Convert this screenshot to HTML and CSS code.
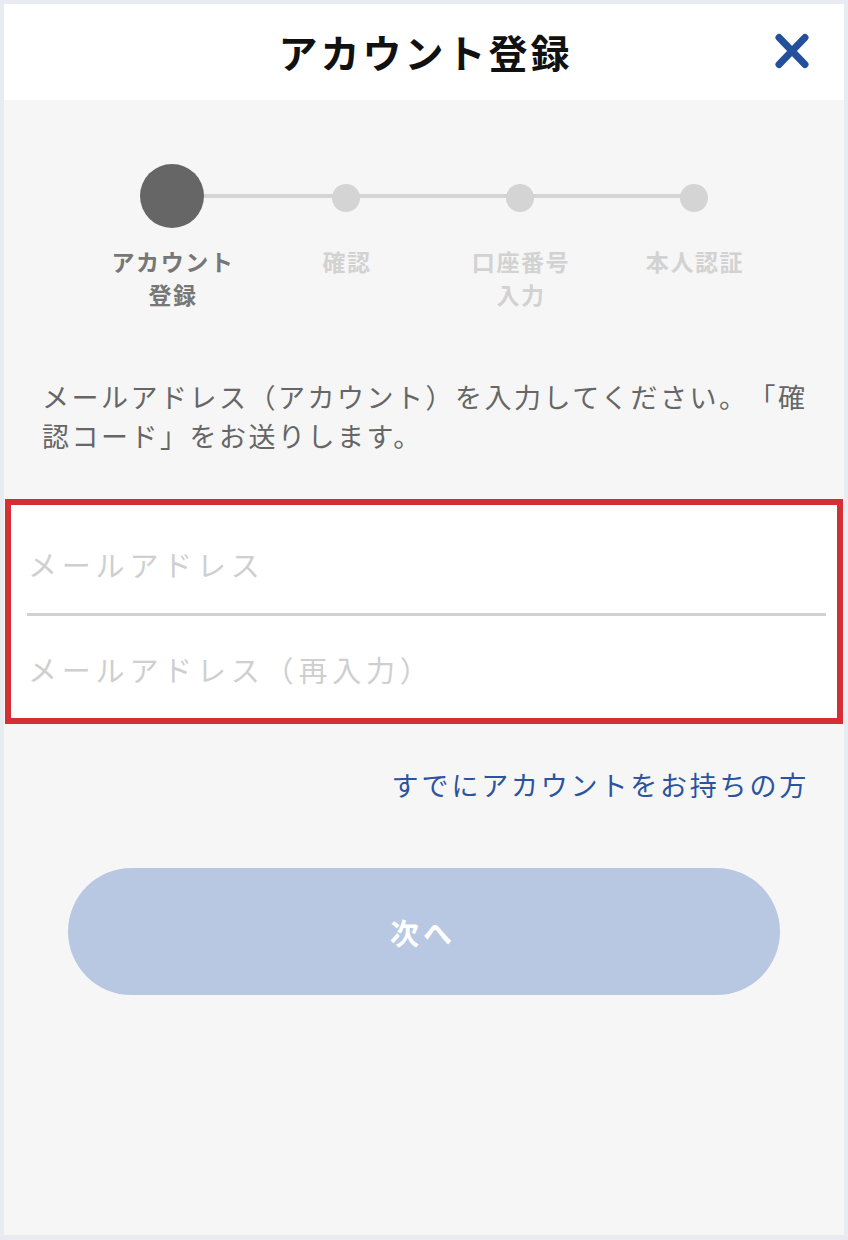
FILE: index.html
```html
<!DOCTYPE html>
<html lang="ja">
<head>
<meta charset="utf-8">
<title>アカウント登録</title>
<link rel="stylesheet" href="styles.css">
</head>
<body>
<div class="screen">
  <header class="header">
    <h1 class="title">アカウント登録</h1>
    <button class="close" type="button" aria-label="閉じる">
      <svg width="40" height="38" viewBox="0 0 40 38"><path d="M7 5.5 L33 32.5 M33 5.5 L7 32.5" stroke="#24509b" stroke-width="7" stroke-linecap="round" fill="none"/></svg>
    </button>
  </header>

  <div class="steps">
    <div class="track">
      <span class="dot-cell"><span class="dot dot-active"></span></span>
      <span class="dot-cell"><span class="dot"></span></span>
      <span class="dot-cell"><span class="dot"></span></span>
      <span class="dot-cell"><span class="dot"></span></span>
    </div>
    <div class="labels">
      <span class="label label-active">アカウント<br>登録</span>
      <span class="label">確認</span>
      <span class="label">口座番号<br>入力</span>
      <span class="label">本人認証</span>
    </div>
  </div>

  <p class="desc">メールアドレス（アカウント）を入力してください。「確認コード」をお送りします。</p>

  <div class="fields">
    <div class="field field-first"><input class="input" type="email" placeholder="メールアドレス"></div>
    <div class="divider"></div>
    <div class="field field-second"><input class="input" type="email" placeholder="メールアドレス（再入力）"></div>
  </div>

  <div class="link-row"><a class="link" href="#">すでにアカウントをお持ちの方</a></div>

  <button class="next" type="button">次へ</button>
</div>
</body>
</html>
```

FILE: styles.css
```css
* { box-sizing: border-box; }
html, body { margin: 0; }
body {
  background: #e8ebf0;
  padding: 4px 4px 5px 4px;
  font-family: "Noto Sans CJK JP", "Noto Sans", sans-serif;
  text-spacing-trim: space-all;
}
.screen {
  width: 840px;
  height: 1231px;
  background: #f6f6f6;
  display: flex;
  flex-direction: column;
}
.header {
  position: relative;
  height: 96px;
  background: #fff;
  display: flex;
  align-items: center;
  justify-content: center;
  flex-shrink: 0;
}
.title {
  margin: 0;
  font-size: 39px;
  font-weight: 700;
  letter-spacing: 3px;
  color: #111;
  line-height: 1;
  padding-left: 3px;
  margin-top: -2px;
}
.close {
  position: absolute;
  right: 32px;
  top: 28px;
  width: 40px;
  height: 38px;
  padding: 0;
  border: 0;
  background: none;
  display: flex;
}
.steps {
  margin-top: 64px;
  padding-left: 81px;
  flex-shrink: 0;
}
.track {
  display: grid;
  grid-template-columns: repeat(4, 174px);
  height: 64px;
  background: linear-gradient(#d4d4d4, #d4d4d4) no-repeat 87px 30px / 522px 4px;
}
.dot-cell {
  display: flex;
  align-items: center;
  justify-content: center;
}
.dot {
  width: 28px;
  height: 28px;
  border-radius: 50%;
  background: #d4d4d4;
  margin-top: 4px;
}
.dot-active {
  width: 64px;
  height: 64px;
  background: #666;
  margin-top: 0;
}
.labels {
  display: grid;
  grid-template-columns: repeat(4, 174px);
  margin-top: 17px;
}
.label {
  text-align: center;
  font-size: 23px;
  font-weight: 700;
  line-height: 33px;
  letter-spacing: 1.6px;
  padding-left: 2px;
  color: #d2d2d2;
}
.label-active { color: #777; }
.desc {
  margin: 66px 0 0 0;
  padding: 0 26px 0 38px;
  font-size: 27px;
  line-height: 39px;
  letter-spacing: 2.5px;
  color: #666;
  flex-shrink: 0;
}
.fields {
  margin: 44px 1px 0 1px;
  border: 6px solid #d32f35;
  background: #fff;
  flex-shrink: 0;
}
.field { display: flex; }
.field-first { height: 108px; padding-top: 9px; }
.field-second { height: 102px; padding-top: 4px; }
.input {
  flex: 1;
  border: 0;
  outline: none;
  background: transparent;
  padding: 0 0 0 17px;
  font-family: "Noto Sans CJK JP", "Noto Sans", sans-serif;
  font-size: 29px;
  letter-spacing: 4.8px;
  color: #333;
}
.input::placeholder { color: #cfcfcf; }
.divider {
  height: 3px;
  margin: 0 11px 0 16px;
  background: #d2d2d2;
}
.link-row {
  margin-top: 41px;
  padding-right: 35px;
  display: flex;
  justify-content: flex-end;
  flex-shrink: 0;
}
.link {
  font-size: 27px;
  line-height: 40px;
  letter-spacing: 2.8px;
  color: #2b53a0;
  text-decoration: none;
}
.next {
  margin: 63px auto 0;
  width: 712px;
  height: 127px;
  flex-shrink: 0;
  border: 0;
  border-radius: 64px;
  background: #b9c8e2;
  color: #fff;
  font-family: "Noto Sans CJK JP", "Noto Sans", sans-serif;
  font-size: 29px;
  font-weight: 700;
  letter-spacing: 4px;
  padding-left: 4px;
}
```
